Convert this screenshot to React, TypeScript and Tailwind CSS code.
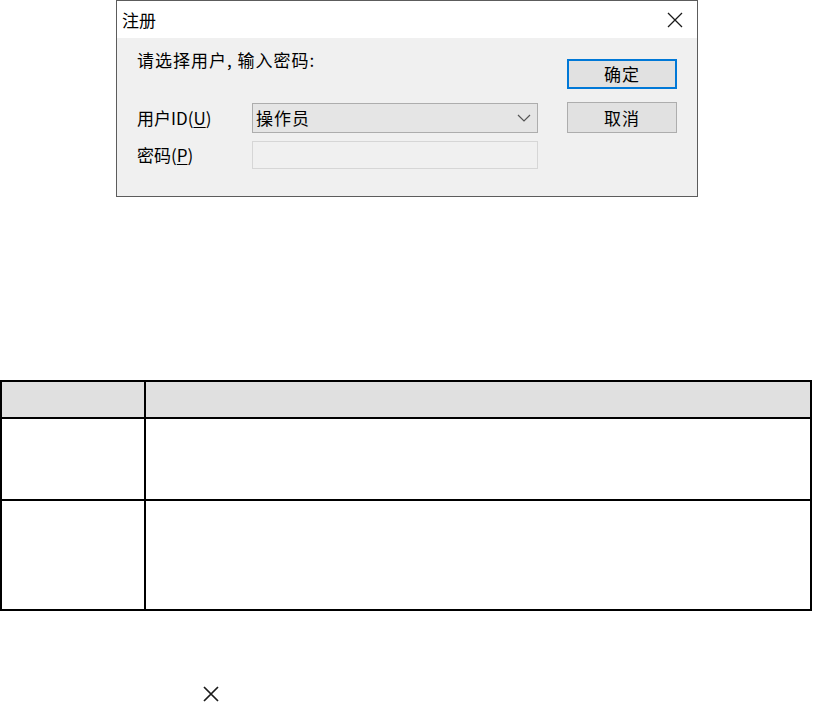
const font = { fontFamily: '"Noto Sans CJK SC", "Noto Sans", sans-serif' };

function CloseIcon({ size, weight }: { size: number; weight: number }) {
  return (
    <svg width={size} height={size} viewBox="0 0 16 16" fill="none">
      <path d="M1 1L15 15M15 1L1 15" stroke="#1a1a1a" strokeWidth={weight} />
    </svg>
  );
}

function Dialog() {
  return (
    <div className="ml-[116px] w-[582px] h-[197px] border border-[#5c5c5c] bg-white flex flex-col">
      <div className="h-[37px] flex items-center justify-between pl-[5px] pr-[14px] bg-white">
        <span className="text-[17px] text-black">注册</span>
        <CloseIcon size={16} weight={1.3} />
      </div>
      <div className="flex-1 bg-[#f0f0f0] flex pl-[20px] pt-[10px]">
        <div className="w-[401px] flex flex-col">
          <div className="h-[24px] leading-[24px] text-[17px] tracking-[1px] text-black">请选择用户, 输入密码:</div>
          <div className="mt-[31px] flex items-center h-[30px]">
            <span className="w-[115px] text-[17px] text-black">
              用户ID(<span className="underline underline-offset-2">U</span>)
            </span>
            <div className="flex-1 h-full bg-[#e5e5e5] border border-[#adadad] flex items-center justify-between pl-[3px] pr-[6px]">
              <span className="text-[17px] tracking-[1px] text-black">操作员</span>
              <svg width="14" height="8" viewBox="0 0 14 8" fill="none">
                <path d="M1 1L7 7L13 1" stroke="#555" strokeWidth="1.2" />
              </svg>
            </div>
          </div>
          <div className="mt-[8px] flex items-center h-[28px]">
            <span className="w-[115px] text-[17px] text-black">
              密码(<span className="underline underline-offset-2">P</span>)
            </span>
            <div className="flex-1 h-full bg-[#f0f0f0] border border-[#d6d6d6]" />
          </div>
        </div>
        <div className="ml-[29px] mt-[11px] flex flex-col gap-[13px]">
          <div className="w-[110px] h-[30px] bg-[#e1e1e1] border-2 border-[#0078d7] flex items-center justify-center text-[17px] tracking-[1px] text-black">
            确定
          </div>
          <div className="w-[110px] h-[31px] bg-[#e1e1e1] border border-[#adadad] flex items-center justify-center text-[17px] tracking-[1px] text-black">
            取消
          </div>
        </div>
      </div>
    </div>
  );
}

function Table() {
  return (
    <div className="mt-[183px] w-[812px] border-2 border-black">
      <div className="flex h-[37px] bg-[#e0e0e0] border-b-2 border-black">
        <div className="w-[144px] border-r-2 border-black" />
        <div className="flex-1" />
      </div>
      <div className="flex h-[82px] border-b-2 border-black">
        <div className="w-[144px] border-r-2 border-black" />
        <div className="flex-1" />
      </div>
      <div className="flex h-[108px]">
        <div className="w-[144px] border-r-2 border-black" />
        <div className="flex-1" />
      </div>
    </div>
  );
}

export default function App() {
  return (
    <div className="w-[813px] h-[704px] bg-white overflow-hidden" style={font}>
      <Dialog />
      <Table />
      <div className="mt-[75px] ml-[203px]">
        <CloseIcon size={16} weight={1.7} />
      </div>
    </div>
  );
}
